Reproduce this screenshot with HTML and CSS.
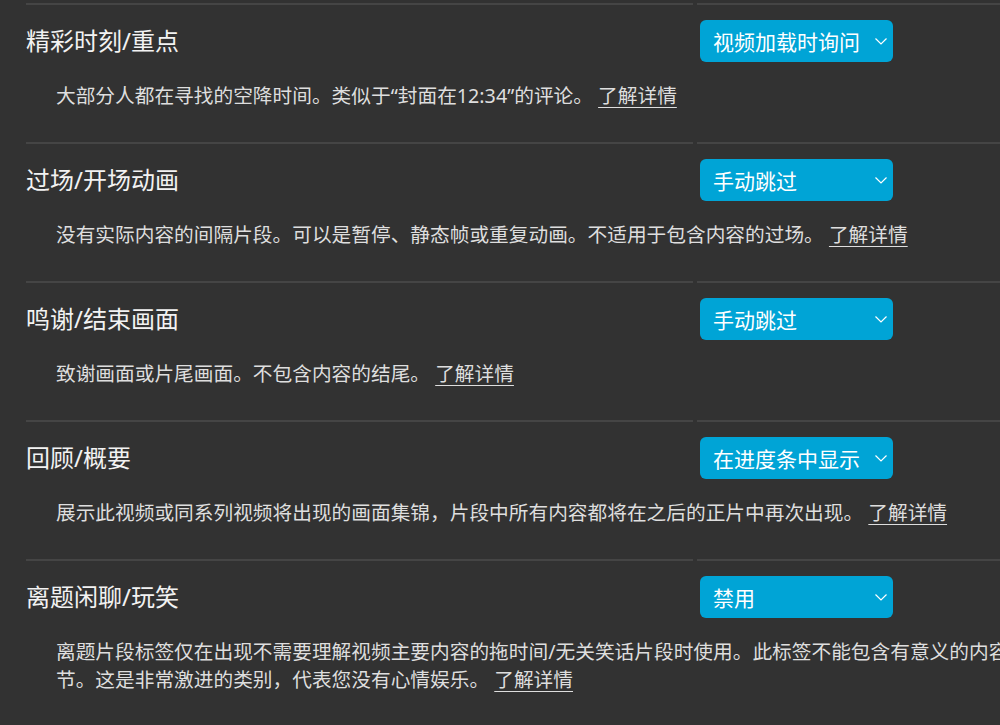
FILE: index.html
```html
<!DOCTYPE html>
<html lang="zh-CN">
<head>
<meta charset="utf-8">
<link rel="stylesheet" href="styles.css">
</head>
<body>
<div class="options">
  <div class="option">
    <div class="title-cell"><span class="title">精彩时刻/重点</span></div>
    <div class="select-cell">
      <div class="select"><span>视频加载时询问</span><svg class="chev" width="12" height="7" viewBox="0 0 12 7"><polyline points="0.5,0.5 6,6 11.5,0.5" fill="none" stroke="#fff" stroke-width="1.2"/></svg></div>
    </div>
    <p class="desc">大部分人都在寻找的空降时间。类似于“封面在12:34”的评论。 <a class="more">了解详情</a></p>
  </div>
  <div class="option">
    <div class="title-cell"><span class="title">过场/开场动画</span></div>
    <div class="select-cell">
      <div class="select"><span>手动跳过</span><svg class="chev" width="12" height="7" viewBox="0 0 12 7"><polyline points="0.5,0.5 6,6 11.5,0.5" fill="none" stroke="#fff" stroke-width="1.2"/></svg></div>
    </div>
    <p class="desc">没有实际内容的间隔片段。可以是暂停、静态帧或重复动画。不适用于包含内容的过场。 <a class="more">了解详情</a></p>
  </div>
  <div class="option">
    <div class="title-cell"><span class="title">鸣谢/结束画面</span></div>
    <div class="select-cell">
      <div class="select"><span>手动跳过</span><svg class="chev" width="12" height="7" viewBox="0 0 12 7"><polyline points="0.5,0.5 6,6 11.5,0.5" fill="none" stroke="#fff" stroke-width="1.2"/></svg></div>
    </div>
    <p class="desc">致谢画面或片尾画面。不包含内容的结尾。 <a class="more">了解详情</a></p>
  </div>
  <div class="option">
    <div class="title-cell"><span class="title">回顾/概要</span></div>
    <div class="select-cell">
      <div class="select"><span>在进度条中显示</span><svg class="chev" width="12" height="7" viewBox="0 0 12 7"><polyline points="0.5,0.5 6,6 11.5,0.5" fill="none" stroke="#fff" stroke-width="1.2"/></svg></div>
    </div>
    <p class="desc">展示此视频或同系列视频将出现的画面集锦，片段中所有内容都将在之后的正片中再次出现。 <a class="more">了解详情</a></p>
  </div>
  <div class="option">
    <div class="title-cell"><span class="title">离题闲聊/玩笑</span></div>
    <div class="select-cell">
      <div class="select"><span>禁用</span><svg class="chev" width="12" height="7" viewBox="0 0 12 7"><polyline points="0.5,0.5 6,6 11.5,0.5" fill="none" stroke="#fff" stroke-width="1.2"/></svg></div>
    </div>
    <p class="desc">离题片段标签仅在出现不需要理解视频主要内容的拖时间/无关笑话片段时使用。此标签不能包含有意义的内容或情节。这是非常激进的类别，代表您没有心情娱乐。 <a class="more">了解详情</a></p>
  </div>
</div>
</body>
</html>
```
FILE: styles.css
```css
html, body {
  margin: 0;
  padding: 0;
  background: #323232;
  overflow: hidden;
  height: 725px;
}

body {
  font-family: "Noto Sans", "Noto Sans CJK SC", sans-serif;
  color: #e6e6e6;
}

.options {
  padding: 3px 0 0 26px;
  width: 1030px;
}

.option {
  display: grid;
  grid-template-columns: 667px 1fr;
  column-gap: 4px;
}

.title-cell,
.select-cell {
  border-top: 2px solid #454545;
  padding-top: 15px;
  display: flex;
  align-items: center;
  height: 42px;
}

.title {
  font-size: 24px;
  color: #f2f2f2;
  line-height: 40px;
}

.select-cell {
  padding-left: 3px;
}

.select {
  width: 193px;
  height: 42px;
  box-sizing: border-box;
  background: #00a4d6;
  border-radius: 6px;
  padding: 0 6px 0 13px;
  display: flex;
  align-items: center;
  justify-content: space-between;
  color: #ffffff;
  font-size: 21px;
}

.chev {
  display: block;
  margin-top: 1px;
}

.desc {
  grid-column: 1 / span 2;
  margin: 20px 0 32px 0;
  padding-left: 30px;
  font-size: 19.7px;
  line-height: 28px;
  color: #dedede;
}

.more {
  color: #dedede;
  text-decoration: underline;
  text-underline-offset: 4px;
}
```
